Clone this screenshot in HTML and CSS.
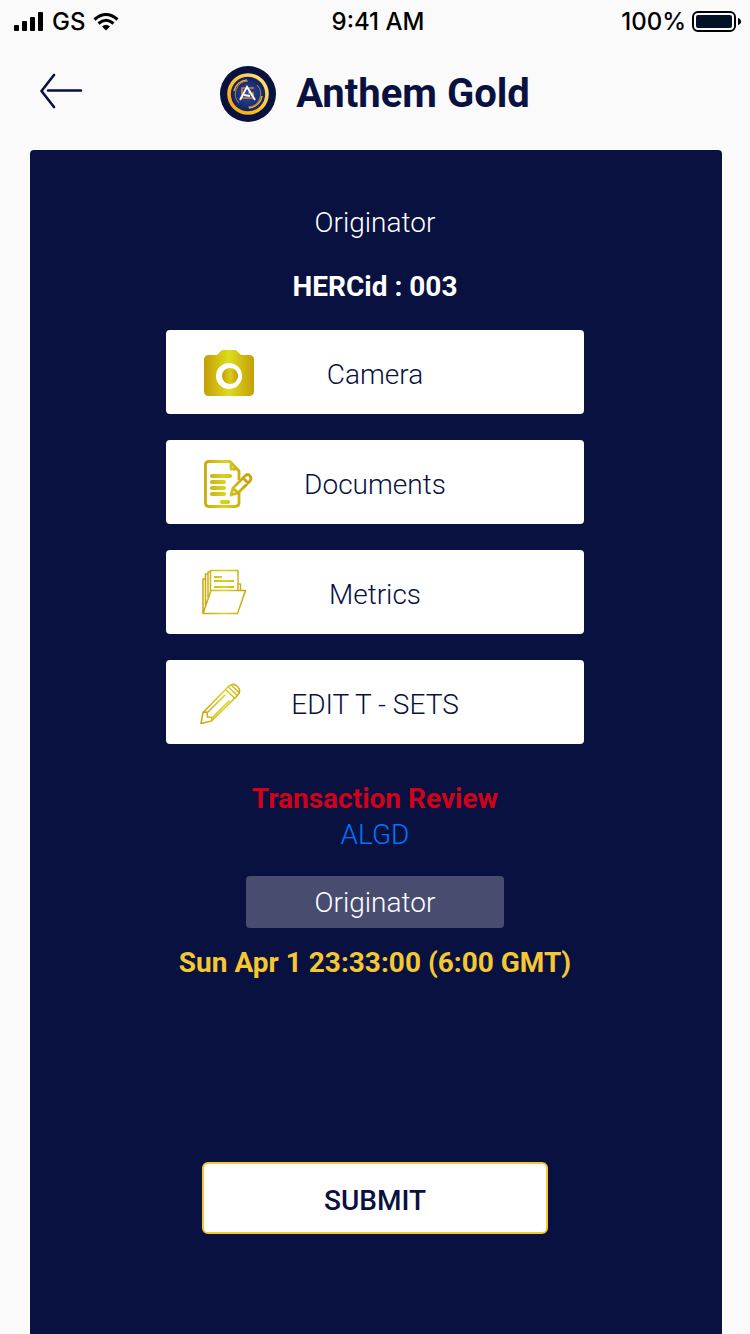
FILE: index.html
```html
<!DOCTYPE html>
<html lang="en">
<head>
<meta charset="utf-8">
<meta name="viewport" content="width=device-width, initial-scale=1">
<title>Anthem Gold</title>
<link rel="stylesheet" href="styles.css">
</head>
<body class="screen">
<div class="status">
  <div class="status-side">
    <svg class="signal" viewBox="0 0 30 20" aria-hidden="true"><rect x="0" y="13" width="5" height="6" rx="1"/><rect x="8" y="9" width="5" height="10" rx="1"/><rect x="16" y="5" width="5" height="14" rx="1"/><rect x="24" y="0" width="5" height="19" rx="1"/></svg>
    <span>GS</span>
    <svg class="wifi" viewBox="0 0 26 18" aria-hidden="true"><path d="M1.500 6.500Q13-3.500 24.500 6.500M5.500 10.500Q13 4 20.500 10.500" fill="none" stroke="#000" stroke-width="3"/><path d="M9 13.500Q13 10 17 13.500L13 17.500Z"/></svg>
  </div>
  <span>9:41 AM</span>
  <div class="status-side status-end">
    <span>100%</span>
    <svg class="battery" viewBox="0 0 50 22" aria-hidden="true"><rect x="1" y="1" width="42" height="19" rx="5" fill="none" stroke="#000" stroke-width="2"/><rect x="4" y="4" width="36" height="13" rx="2" fill="#041227"/><path d="M46 7Q49 8 49 10.500T46 14Z"/></svg>
  </div>
</div>
<header class="header">
  <button class="back" type="button" aria-label="Back">
    <svg class="back-icon" viewBox="0 0 44 36" fill="none" stroke="#08113f" stroke-width="2.600" stroke-linecap="round" stroke-linejoin="round" aria-hidden="true"><path d="M14 2L1.500 18 14 34M8 17.500H41"/></svg>
  </button>
  <div class="brand">
    <svg class="logo" viewBox="0 0 56 56" fill="none" aria-hidden="true">
      <defs>
        <linearGradient id="ring" x1="0" y1="1" x2="1" y2="0"><stop offset="0" stop-color="#f7a50b"/><stop offset=".5" stop-color="#fbc52b"/><stop offset="1" stop-color="#ffe58a"/></linearGradient>
        <radialGradient id="disc"><stop offset="0" stop-color="#2a4fa3"/><stop offset="1" stop-color="#101b58"/></radialGradient>
      </defs>
      <circle cx="28" cy="28" r="28" fill="#08113f"/>
      <circle cx="28" cy="28" r="19" fill="url(#disc)" stroke="url(#ring)" stroke-width="3.600"/>
      <path d="M28 15A13 13 0 0 0 19 37M28 41A13 13 0 0 0 37 19" stroke="#a8894f"/>
      <path d="M14 25A14 14 0 0 1 27 14M42 30A14 14 0 0 1 29 42" stroke="#e9a532" stroke-width="1.500"/>
      <path d="M34 22H22V32H33V27H28" stroke="#d9802a" stroke-width="1.700"/>
      <path d="M20 34L27 21 35 34M24 29L30 30" stroke="#fff" stroke-width="1.900"/>
    </svg>
    <h1 class="title">Anthem Gold</h1>
  </div>
</header>
<main class="panel">
  <p class="role">Originator</p>
  <p class="herc">HERCid : 003</p>
  <div class="actions">
    <button class="action" type="button">
      <svg class="icon" viewBox="0 0 56 56" aria-hidden="true">
        <defs>
          <linearGradient id="gold" gradientUnits="userSpaceOnUse" x1="4" y1="0" x2="54" y2="0"><stop offset="0" stop-color="#c59d09"/><stop offset=".5" stop-color="#dcdc1c"/><stop offset="1" stop-color="#c59d09"/></linearGradient>
          <linearGradient id="lens"><stop offset="0" stop-color="#c59d09"/><stop offset=".5" stop-color="#d6cf18"/><stop offset="1" stop-color="#c59d09"/></linearGradient>
          <linearGradient id="line" gradientUnits="userSpaceOnUse" x1="2" y1="0" x2="46" y2="0"><stop offset="0" stop-color="#c7a20c"/><stop offset=".5" stop-color="#d9d31d"/><stop offset="1" stop-color="#c7a20c"/></linearGradient>
        </defs>
        <path fill="url(#gold)" d="M9 11H17L21 7Q22 6 23 6H35Q36 6 37 7L41 11H49Q54 11 54 16V47Q54 52 49 52H9Q4 52 4 47V16Q4 11 9 11Z"/><circle cx="29" cy="32" r="13" fill="#fff"/><circle cx="30" cy="32" r="8" fill="url(#lens)"/>
      </svg>
      <span class="label">Camera</span>
    </button>
    <button class="action" type="button">
      <svg class="icon" viewBox="0 0 56 56" fill="none" stroke="url(#line)" stroke-width="2.800" stroke-linejoin="round" aria-hidden="true">
        <path d="M39 26V17L30 7.500H9Q5.500 7.500 5.500 11V49Q5.500 52.500 9 52.500H35Q39 52.500 39 49V39M31 8V15H38"/>
        <path stroke-width="4" stroke-linecap="round" d="M12 22.010L30 22M12 28.010L24 28M12 34.010L24 34M12 40.010L24 40M22 48.010L28 48"/>
        <path d="M31 41L33 34 45 22Q48 19 50 22 52 24 50 27L38 39ZM43 24L48 29M33 34L38 39"/>
      </svg>
      <span class="label">Documents</span>
    </button>
    <button class="action" type="button">
      <svg class="icon" viewBox="0 0 56 56" fill="none" stroke="url(#line)" stroke-width="1.500" stroke-linejoin="round" aria-hidden="true">
        <path d="M11 26.500H45.500L37.500 49.500H3ZM3 49V15H5.500M5.500 41V10H8M8 34V8H10.500M10.500 27V6.500H38V26M38 20H40.500V26"/>
        <path stroke-width="2" d="M14 13.010L22 13M14 17.010L34 17M14 23.010L34 23"/>
      </svg>
      <span class="label">Metrics</span>
    </button>
    <button class="action" type="button">
      <svg class="icon" viewBox="0 0 56 56" fill="none" stroke="url(#line)" stroke-width="1.500" stroke-linejoin="round" stroke-linecap="round" aria-hidden="true">
        <path d="M1 49.500L3 38.500 28 13Q33 8 37.500 12.500 42 17 37 22L11.500 47ZM3 38.500L7 38 7.500 43 12 43.500 11.500 47M25.500 15.500L35 24.500M28.500 13L37 21.500M31 11L39.500 19M8 38L25 21M13 43L29 27"/>
      </svg>
      <span class="label">EDIT T - SETS</span>
    </button>
  </div>
  <h2 class="review">Transaction Review</h2>
  <p class="asset">ALGD</p>
  <p class="badge">Originator</p>
  <p class="date">Sun Apr 1 23:33:00 (6:00 GMT)</p>
  <button class="submit" type="button">SUBMIT</button>
</main>
</body>
</html>
```
FILE: styles.css
```css
* { box-sizing: border-box; }

.screen {
  margin: 0;
  min-height: 100vh;
  display: flex;
  flex-direction: column;
  background: #fafafa;
  color: #08113f;
  font-family: Roboto, "Liberation Sans", sans-serif;
  font-size: 28px;
  line-height: 36px;
}

.status {
  display: grid;
  grid-template-columns: 1fr auto 1fr;
  align-items: center;
  height: 44px;
  padding: 0 8px 0 14px;
  color: #000;
  font-family: Inter, "Open Sans", sans-serif;
  font-size: 24px;
  font-weight: 500;
}

.status-side { display: flex; align-items: center; gap: 8px; }
.status-end { justify-content: flex-end; gap: 6px; }
.signal { width: 30px; height: 20px; }
.wifi { width: 26px; height: 18px; }
.battery { width: 50px; height: 22px; }

.header {
  display: grid;
  grid-template-columns: 1fr auto 1fr;
  align-items: center;
  height: 100px;
  margin-bottom: 6px;
  padding: 0 40px;
}

.back {
  justify-self: start;
  padding: 0 0 6px;
  border: 0;
  background: none;
  cursor: pointer;
}

.back-icon { display: block; width: 44px; height: 36px; }
.brand { display: flex; align-items: center; gap: 20px; }
.logo { width: 56px; height: 56px; }

.title {
  margin: 0;
  font-size: 40px;
  line-height: 48px;
  font-weight: 700;
}

.panel {
  flex: 1;
  display: flex;
  flex-direction: column;
  align-items: center;
  margin: 0 28px 0 30px;
  padding: 55px 26px 100px 24px;
  border-radius: 4px 4px 0 0;
  background: #08113f;
  color: #fff;
  text-align: center;
}

.role { margin: 0 0 28px; font-weight: 300; }
.herc { margin: 0 0 25px; font-weight: 700; }

.actions {
  display: grid;
  gap: 26px;
  width: 100%;
  max-width: 418px;
}

.action {
  display: grid;
  grid-template-columns: 1fr auto 1fr;
  align-items: center;
  height: 84px;
  padding: 0 34px;
  border: 0;
  border-radius: 4px;
  background: #fff;
  color: #08113f;
  font: inherit;
  font-weight: 300;
  cursor: pointer;
}

.icon { width: 56px; height: 56px; }
.label { padding-top: 5px; }

.review {
  margin: 37px 0 0;
  color: #d0021b;
  font-size: 28px;
  font-weight: 700;
}

.asset { margin: 0; color: #0075ff; font-weight: 300; }

.badge {
  width: 100%;
  max-width: 258px;
  margin: 23px 0 17px;
  padding: 9px 8px 7px;
  border-radius: 4px;
  background: #484d70;
  font-weight: 300;
}

.date { margin: 0; color: #f5c832; font-weight: 700; }

.submit {
  width: 100%;
  max-width: 346px;
  height: 72px;
  margin-top: 181px;
  padding: 5px 0 0;
  border: 2px solid #f5c832;
  border-radius: 6px;
  background: #fff;
  color: #08113f;
  font: inherit;
  font-weight: 500;
  cursor: pointer;
}
```
